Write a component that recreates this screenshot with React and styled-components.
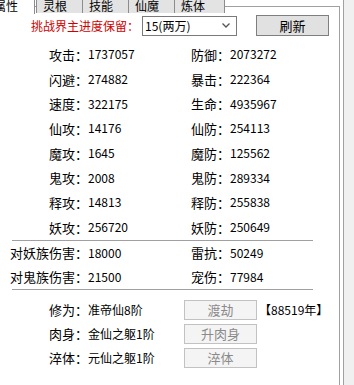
import React from 'react';
import styled, { createGlobalStyle } from 'styled-components';

const GlobalStyle = createGlobalStyle`
  html, body {
    margin: 0;
    padding: 0;
    background: #ffffff;
  }
  body {
    font-family: "Noto Sans CJK SC", "Noto Sans", sans-serif;
    color: #000000;
  }
`;

const tabs = [
  { name: '属性', width: 48, active: true },
  { name: '灵根', width: 47 },
  { name: '技能', width: 47 },
  { name: '仙魔', width: 47 },
  { name: '炼体', width: 51 },
];

const stats = [
  ['攻击', '1737057', '防御', '2073272'],
  ['闪避', '274882', '暴击', '222364'],
  ['速度', '322175', '生命', '4935967'],
  ['仙攻', '14176', '仙防', '254113'],
  ['魔攻', '1645', '魔防', '125562'],
  ['鬼攻', '2008', '鬼防', '289334'],
  ['释攻', '14813', '释防', '255838'],
  ['妖攻', '256720', '妖防', '250649'],
];

const damage = [
  ['对妖族伤害', '18000', '雷抗', '50249'],
  ['对鬼族伤害', '21500', '宠伤', '77984'],
];

const realms = [
  { label: '修为', value: '准帝仙8阶', action: '渡劫', note: '【88519年】' },
  { label: '肉身', value: '金仙之躯1阶', action: '升肉身' },
  { label: '淬体', value: '元仙之躯1阶', action: '淬体' },
];

function App() {
  return (
    <Window>
      <GlobalStyle />
      <Main>
        <TabStrip>
          {tabs.map((t) => (
            <Tab key={t.name} $active={t.active} $width={t.width}>{t.name}</Tab>
          ))}
        </TabStrip>
        <Panel>
          <ProgressRow>
            <RedLabel>挑战界主进度保留：</RedLabel>
            <Select>
              <span>15(两万)</span>
              <svg width="8" height="5" viewBox="0 0 8 5">
                <polyline points="0.5 0.5 4 4 7.5 0.5" fill="none" stroke="#555" strokeWidth="1.3" />
              </svg>
            </Select>
            <RefreshButton>刷新</RefreshButton>
          </ProgressRow>

          <StatGrid $rowHeight={24.7} $top={6}>
            {stats.map((r) => (
              <React.Fragment key={r[0]}>
                <Label>{r[0]}：</Label>
                <Value>{r[1]}</Value>
                <Label>{r[2]}：</Label>
                <Value>{r[3]}</Value>
              </React.Fragment>
            ))}
          </StatGrid>
          <Divider />
          <StatGrid $rowHeight={24} $top={0}>
            {damage.map((r) => (
              <React.Fragment key={r[0]}>
                <Label>{r[0]}：</Label>
                <Value>{r[1]}</Value>
                <Label>{r[2]}：</Label>
                <Value>{r[3]}</Value>
              </React.Fragment>
            ))}
          </StatGrid>
          <Divider />

          <RealmList>
            {realms.map((r) => (
              <React.Fragment key={r.label}>
                <Label>{r.label}：</Label>
                <Value>{r.value}</Value>
                <ActionButton disabled>{r.action}</ActionButton>
                <Note>{r.note || ''}</Note>
              </React.Fragment>
            ))}
          </RealmList>
        </Panel>
      </Main>
      <SideStrip />
    </Window>
  );
}

const Window = styled.div`
  display: flex;
  width: 354px;
  height: 385px;
  overflow: hidden;
`;

const Main = styled.div`
  width: 343px;
  display: flex;
  flex-direction: column;
  background: #ffffff;
`;

const SideStrip = styled.div`
  flex: 1;
  background: #f0f0f0;
  border-left: 1px solid #a0a0a0;
`;

const TabStrip = styled.div`
  display: flex;
  height: 13px;
  margin-top: -7px;
  align-items: flex-start;
`;

const Tab = styled.div`
  box-sizing: border-box;
  width: ${(p) => p.$width}px;
  height: ${(p) => (p.$active ? 21 : 20)}px;
  margin-left: ${(p) => (p.$active ? -13 : 0)}px;
  margin-right: ${(p) => (p.$active ? 2 : 0)}px;
  padding: 6px 0 0 6px;
  font-size: 12px;
  line-height: 11px;
  background: ${(p) => (p.$active ? '#ffffff' : '#e3e3e3')};
  border: 1px solid #8c8c8c;
  border-bottom: none;
  position: relative;
  z-index: ${(p) => (p.$active ? 1 : 0)};
  & + & {
    margin-left: ${(p) => (p.$active ? -13 : -1)}px;
  }
`;

const Panel = styled.div`
  flex: 1;
  width: 340px;
  box-sizing: border-box;
  border-top: 1px solid #a0a0a0;
  border-right: 1px solid #a0a0a0;
`;

const ProgressRow = styled.div`
  display: flex;
  align-items: center;
  height: 21px;
  padding: 8px 0 0 31px;
`;

const RedLabel = styled.span`
  font-size: 12px;
  line-height: 14px;
  color: #d00000;
`;

const Select = styled.div`
  box-sizing: border-box;
  width: 95px;
  height: 20px;
  margin-left: 3px;
  border: 1px solid #7a7a7a;
  display: flex;
  align-items: center;
  justify-content: space-between;
  padding: 0 6px 0 2px;
  font-size: 12px;
  line-height: 14px;
  background: #ffffff;
`;

const RefreshButton = styled.button`
  box-sizing: border-box;
  width: 73px;
  height: 21px;
  margin-left: 19px;
  padding: 0;
  font-family: inherit;
  font-size: 13px;
  line-height: 15px;
  color: #000000;
  background: #e1e1e1;
  border: 1px solid #7f7f7f;
  border-radius: 0;
`;

const StatGrid = styled.div`
  display: grid;
  grid-template-columns: 88px 102px 40px 1fr;
  grid-auto-rows: ${(p) => p.$rowHeight}px;
  align-items: center;
  padding-top: ${(p) => p.$top}px;
`;

const Label = styled.span`
  font-size: 13px;
  line-height: 15px;
  text-align: right;
  white-space: nowrap;
`;

const Value = styled.span`
  font-size: 12px;
  line-height: 14px;
  white-space: nowrap;
`;

const Divider = styled.div`
  height: 1px;
  width: 301px;
  margin-left: 12px;
  background: #a0a0a0;
`;

const RealmList = styled.div`
  display: grid;
  grid-template-columns: 88px 96px 73px 1fr;
  grid-auto-rows: 24px;
  align-items: center;
  padding-top: 8px;
`;

const ActionButton = styled.button`
  box-sizing: border-box;
  width: 73px;
  height: 20px;
  padding: 0;
  font-family: inherit;
  font-size: 13px;
  line-height: 15px;
  color: #8a8a8a;
  background: #f4f4f4;
  border: 1px solid #c2c2c2;
  border-radius: 0;
`;

const Note = styled.span`
  font-size: 12px;
  line-height: 14px;
  margin-left: 2px;
  white-space: nowrap;
`;

export default App;
